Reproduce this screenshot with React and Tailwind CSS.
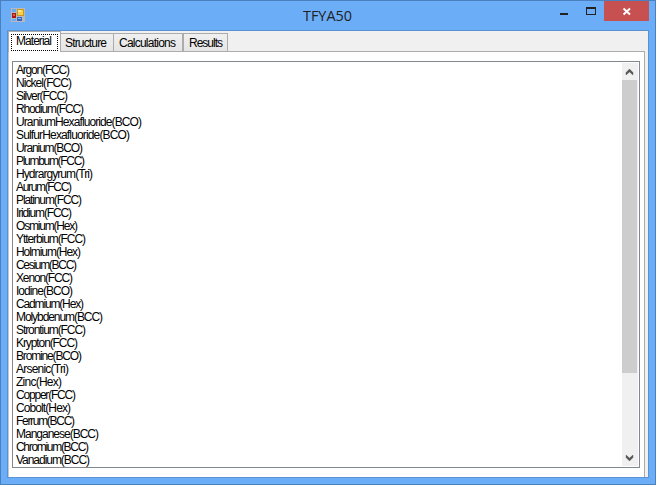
import React from "react";

const materials = [
  ["Argon(FCC)", 54], ["Nickel(FCC)", 56], ["Silver(FCC)", 52], ["Rhodium(FCC)", 68],
  ["UraniumHexafluoride(BCO)", 126], ["SulfurHexafluoride(BCO)", 114], ["Uranium(BCO)", 67],
  ["Plumbum(FCC)", 69], ["Hydrargyrum(Tri)", 77], ["Aurum(FCC)", 56], ["Platinum(FCC)", 66],
  ["Iridium(FCC)", 56], ["Osmium(Hex)", 62], ["Ytterbium(FCC)", 70], ["Holmium(Hex)", 65],
  ["Cesium(BCC)", 61], ["Xenon(FCC)", 57], ["Iodine(BCO)", 57], ["Cadmium(Hex)", 68],
  ["Molybdenum(BCC)", 87], ["Strontium(FCC)", 70], ["Krypton(FCC)", 62], ["Bromine(BCO)", 66],
  ["Arsenic(Tri)", 53], ["Zinc(Hex)", 46], ["Copper(FCC)", 60], ["Cobolt(Hex)", 55],
  ["Ferrum(BCC)", 59], ["Manganese(BCC)", 83], ["Chromium(BCC)", 73], ["Vanadium(BCC)", 74],
];

function Label({ text, width }) {
  return (
    <svg width={width} height="13" className="block shrink-0 overflow-visible">
      <text x="0" y="11" textLength={width} lengthAdjust="spacing" fontSize="12" fill="#000">{text}</text>
    </svg>
  );
}

function AppIcon() {
  return (
    <svg width="14" height="14" viewBox="0 0 14 14" shapeRendering="crispEdges">
      <path d="M0 0h14v14H0z" fill="#b9b9b9" />
      <path d="M1 1h4v3H1zM1 11h4v2H1z" fill="#6ca9f5" />
      <path d="M6 1h7v7H6z" fill="#c9971c" />
      <path d="M7 2h5v5H7z" fill="#fbcf4b" />
      <path d="M7 2h3v2H7z" fill="#ffe89a" />
      <path d="M1 5h4v5H1z" fill="#a31a14" />
      <path d="M2 6h2v2H2z" fill="#e2594f" />
      <path d="M6 9h5v4H6z" fill="#3567c4" />
      <path d="M7 10h3v1H7z" fill="#87b4f5" />
    </svg>
  );
}

function Tab({ text, width, cls }) {
  return (
    <div className={`flex h-[18px] items-center border border-b-0 border-[#acacac] bg-gradient-to-b from-[#f0f0f0] to-[#e5e5e5] ${cls}`}>
      <Label text={text} width={width} />
    </div>
  );
}

export default function App() {
  return (
    <div className="h-[487px] w-[658px] overflow-hidden bg-white font-['Liberation_Sans',Arial,sans-serif] text-black">
      <div className="flex h-[485px] w-[656px] flex-col border border-[#4a80bd] bg-[#6badf6]">
        <header className="flex h-[29px] shrink-0">
          <div className="w-[250px] shrink-0 pl-[10px] pt-[7px]"><AppIcon /></div>
          <div className="w-[154px] shrink-0 pl-[52px] pt-[6px] font-['Open_Sans','Noto_Sans',sans-serif]">
            <svg width="49" height="18" className="block overflow-visible">
              <text x="0" y="14" fontSize="15" textLength="49" lengthAdjust="spacingAndGlyphs" fill="#222">TFYA50</text>
            </svg>
          </div>
          <svg width="190" height="20" viewBox="0 0 190 20" className="ml-[54px] shrink-0" shapeRendering="crispEdges">
            <path d="M101 12h8v2h-8z" fill="#222" />
            <path d="M127 6h10v8h-10zM128 8v5h8V8z" fillRule="evenodd" fill="#222" />
            <path d="M145 0h45v20h-45z" fill="#c75050" />
            <path d="M164.5 7.5l6.5 6M171 7.5l-6.5 6" stroke="#fff" strokeWidth="1.9" shapeRendering="auto" />
          </svg>
        </header>
        <main className="ml-[6px] flex h-[448px] w-[642px] flex-col border border-[#5a93d4] bg-[#f0f0f0]">
          <div className="flex h-[20px] shrink-0 items-end">
            <div className="z-10 -mb-px flex h-[21px] w-[53px] border border-b-0 border-[#acacac] bg-white">
              <div className="ml-[2px] mt-[2px] flex h-[17px] w-[47px] border border-dotted border-black pl-[4px]">
                <div className="-mt-px"><Label text="Material" width={36} /></div>
              </div>
            </div>
            <Tab text="Structure" width={42} cls="w-[53px] border-l-0 pl-[4px]" />
            <Tab text="Calculations" width={57} cls="w-[69px] border-l-0 pl-[5px]" />
            <Tab text="Results" width={34} cls="w-[45px] pl-[5px]" />
          </div>
          <section className="flex h-[426px] w-[637px] border border-b-0 border-[#acacac] border-l-[#c8c8c8] bg-white pl-[3px] pt-[9px]">
            <div className="flex h-[407px] w-[628px] border border-[#828790] bg-white">
              <div className="flex w-[609px] flex-col overflow-hidden pl-[3px] pt-px">
                {materials.map(([text, width]) => <Label key={text} text={text} width={width} />)}
              </div>
              <div className="mt-px flex h-[403px] w-[16px] flex-col bg-[#f0f0f0]">
                <svg width="16" height="17" viewBox="0 0 16 17"><path d="M4 9.6L7.5 6L11 9.6V12L7.5 8.9L4 12Z" fill="#555" stroke="#555" strokeWidth=".4" /></svg>
                <div className="h-[293px] w-[15px] bg-[#cdcdcd]" />
                <svg width="16" height="17" viewBox="0 0 16 17" className="mt-auto"><path d="M4 8.4L7.5 12L11 8.4V6L7.5 9.1L4 6Z" fill="#555" stroke="#555" strokeWidth=".4" /></svg>
              </div>
            </div>
          </section>
        </main>
      </div>
    </div>
  );
}
